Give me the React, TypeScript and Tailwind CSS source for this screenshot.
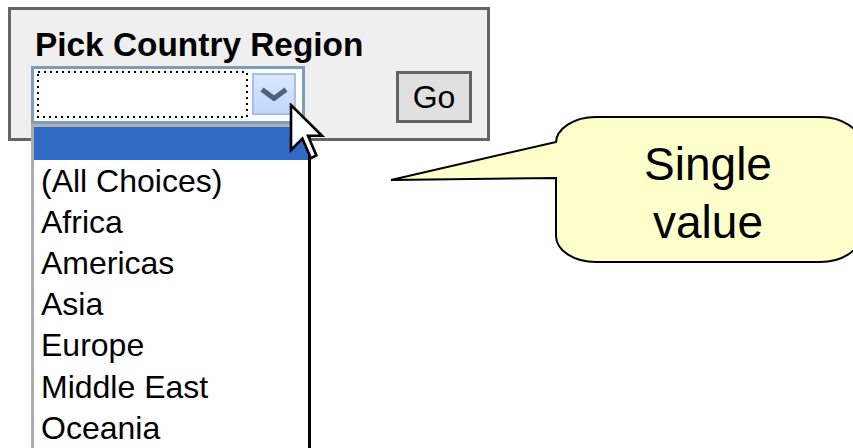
import React from "react";

const items = ["(All Choices)", "Africa", "Americas", "Asia", "Europe", "Middle East", "Oceania"];

export default function App() {
  return (
    <div
      className="relative w-[853px] h-[448px] overflow-hidden bg-white"
      style={{ fontFamily: '"Liberation Sans", Arial, sans-serif' }}
    >
      {/* Panel */}
      <div className="ml-[8px] mt-[7px] w-[482px] h-[134px] border-[3px] border-[#646464] bg-[#efefef] pl-[20px] pt-[16px]">
        <div className="pl-[4px] text-[33.4px] leading-[38px] font-bold text-black whitespace-nowrap">
          Pick Country Region
        </div>
        <div className="mt-[2px] flex items-start">
          <div className="relative w-[274px] h-[58px] border-[3px] border-[#7f9db9] bg-white flex items-start pl-[3px] pt-[2px]">
            <div className="relative w-[211px] h-[47px]">
              <svg className="absolute inset-0" width="211" height="47">
                <rect
                  x="1"
                  y="1"
                  width="209"
                  height="45"
                  fill="none"
                  stroke="#000"
                  strokeWidth="2"
                  strokeDasharray="2 4"
                />
              </svg>
            </div>
            <div className="ml-[4px] mt-[2px] w-[44px] h-[42px] border-2 border-[#a7bcf2] bg-gradient-to-b from-[#d9e7fe] to-[#c2d7fb] flex items-center justify-center">
              <svg width="28" height="14" viewBox="0 0 28 14">
                <polyline
                  points="2,2.5 14,11.5 26,2.5"
                  fill="none"
                  stroke="#4d6185"
                  strokeWidth="5"
                />
              </svg>
            </div>
            {/* dropdown list */}
            <div className="absolute left-[-3px] top-[55px] w-[280px] h-[340px] border-l-[3px] border-t-[3px] border-r-[3px] border-l-[#acacac] border-t-[#b0b0b0] border-r-black bg-white z-10">
              <div className="h-[33px] bg-[#316ac5]" />
              {items.map((it) => (
                <div
                  key={it}
                  className="h-[41.2px] pl-[7px] flex items-center text-[32px] leading-[36px] text-black whitespace-nowrap"
                >
                  {it}
                </div>
              ))}
            </div>
          </div>
          <div className="ml-[91px] mt-[5px] w-[76px] h-[52px] border-[3px] border-[#646464] bg-[#e0e0e0] flex items-center justify-center text-[32px] leading-[36px] text-black">
            Go
          </div>
        </div>
      </div>

      {/* Cursor */}
      <svg
        className="absolute left-[289px] top-[103px] z-20"
        width="40"
        height="60"
        viewBox="0 0 40 60"
      >
        <polygon
          points="2,2 2,47 13.4,35.6 21.8,55.2 27.4,52.4 19,32.8 33,32.8"
          fill="#fff"
          stroke="#000"
          strokeWidth="2.6"
          strokeLinejoin="miter"
        />
      </svg>

      {/* Callout */}
      <div className="absolute left-[380px] top-[110px] w-[490px] h-[160px]">
        <svg className="absolute inset-0" width="490" height="160" viewBox="0 0 490 160">
          <path
            d="M216,7 L440,7 A40,26 0 0 1 480,33 L480,126 A40,26 0 0 1 440,152 L216,152 A40,26 0 0 1 176,126 L176,68 L11,70 L176,32 L176,33 A40,26 0 0 1 216,7 Z"
            fill="#ffffcc"
            stroke="#000"
            strokeWidth="2"
            strokeLinejoin="miter"
          />
        </svg>
        <div className="absolute left-[176px] top-[25px] w-[304px] text-center text-[46px] leading-[58px] text-black">
          <div>Single</div>
          <div>value</div>
        </div>
      </div>
    </div>
  );
}
